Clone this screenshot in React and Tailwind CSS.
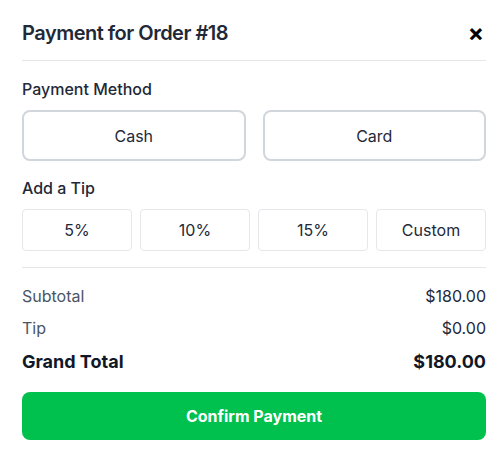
import React, { useState } from 'react';
import clsx from 'clsx';

const tips = ['5%', '10%', '15%', 'Custom'];

export default function App() {
    const [method, setMethod] = useState(null);
    const [tip, setTip] = useState(null);
    const subtotal = 180;
    const tipAmount = 0;

    return (
        <div className="w-[500px] h-[455px] bg-white pl-[22px] pr-[14px] text-[#1f2937]" style={{ fontFamily: 'Inter, "Noto Sans", sans-serif' }}>
            {/* Header */}
            <div className="flex items-center justify-between pt-[19px] pb-[13px] border-b border-gray-200">
                <h2 className="text-xl leading-7 font-semibold tracking-tight">Payment for Order #18</h2>
                <button className="text-2xl leading-7 font-bold text-black mr-[2px]">×</button>
            </div>

            {/* Payment method */}
            <div className="mt-4 text-base leading-6 font-medium">Payment Method</div>
            <div className="mt-[9px] grid grid-cols-2 gap-[17px]">
                {['Cash', 'Card'].map(m => (
                    <button
                        key={m}
                        onClick={() => setMethod(m)}
                        className={clsx(
                            "h-[51px] rounded-lg border-2 text-base text-gray-800",
                            method === m ? "border-green-500 bg-green-50" : "border-gray-300"
                        )}
                    >
                        {m}
                    </button>
                ))}
            </div>

            {/* Tip */}
            <div className="mt-[15px] text-base leading-6 font-medium">Add a Tip</div>
            <div className="mt-[9px] grid grid-cols-4 gap-2">
                {tips.map(t => (
                    <button
                        key={t}
                        onClick={() => setTip(t)}
                        className={clsx(
                            "h-[42px] rounded border text-base text-gray-800",
                            tip === t ? "border-green-500 bg-green-50" : "border-gray-200"
                        )}
                    >
                        {t}
                    </button>
                ))}
            </div>

            {/* Totals */}
            <div className="mt-4 border-t border-gray-200 pt-4 flex flex-col gap-2">
                <div className="flex justify-between text-base leading-6">
                    <span className="text-gray-600">Subtotal</span>
                    <span className="text-gray-800">${subtotal.toFixed(2)}</span>
                </div>
                <div className="flex justify-between text-base leading-6">
                    <span className="text-gray-600">Tip</span>
                    <span className="text-gray-800">${tipAmount.toFixed(2)}</span>
                </div>
                <div className="flex justify-between text-lg leading-7 font-bold text-gray-900">
                    <span>Grand Total</span>
                    <span>${(subtotal + tipAmount).toFixed(2)}</span>
                </div>
            </div>

            <button className="mt-4 w-full h-12 rounded-lg bg-[#00c14d] text-white font-bold text-base">
                Confirm Payment
            </button>
        </div>
    );
}
